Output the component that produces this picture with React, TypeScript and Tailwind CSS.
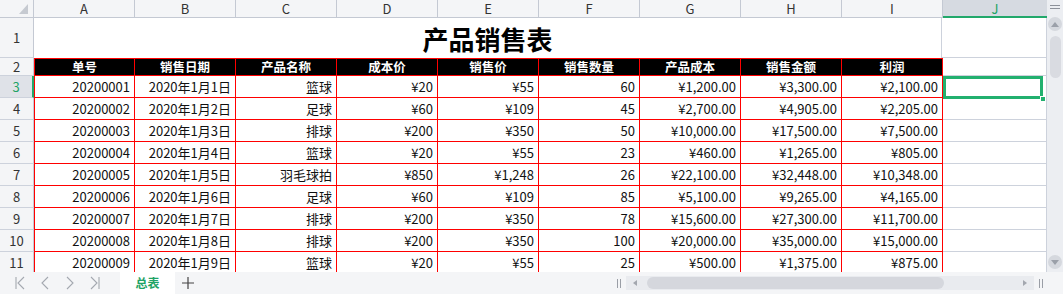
import React from 'react';

const cols = ['A', 'B', 'C', 'D', 'E', 'F', 'G', 'H', 'I'];
const heads = ['单号', '销售日期', '产品名称', '成本价', '销售价', '销售数量', '产品成本', '销售金额', '利润'];

const rows: string[][] = [
  ['20200001', '2020年1月1日', '篮球', '¥20', '¥55', '60', '¥1,200.00', '¥3,300.00', '¥2,100.00'],
  ['20200002', '2020年1月2日', '足球', '¥60', '¥109', '45', '¥2,700.00', '¥4,905.00', '¥2,205.00'],
  ['20200003', '2020年1月3日', '排球', '¥200', '¥350', '50', '¥10,000.00', '¥17,500.00', '¥7,500.00'],
  ['20200004', '2020年1月4日', '篮球', '¥20', '¥55', '23', '¥460.00', '¥1,265.00', '¥805.00'],
  ['20200005', '2020年1月5日', '羽毛球拍', '¥850', '¥1,248', '26', '¥22,100.00', '¥32,448.00', '¥10,348.00'],
  ['20200006', '2020年1月6日', '足球', '¥60', '¥109', '85', '¥5,100.00', '¥9,265.00', '¥4,165.00'],
  ['20200007', '2020年1月7日', '排球', '¥200', '¥350', '78', '¥15,600.00', '¥27,300.00', '¥11,700.00'],
  ['20200008', '2020年1月8日', '排球', '¥200', '¥350', '100', '¥20,000.00', '¥35,000.00', '¥15,000.00'],
  ['20200009', '2020年1月9日', '篮球', '¥20', '¥55', '25', '¥500.00', '¥1,375.00', '¥875.00'],
];

const RowHead = ({ n, h, active }: { n: number; h: string; active?: boolean }) => (
  <div
    className={`${h} w-[34px] shrink-0 flex items-center justify-center border-b border-[#cdd2dc] ${
      active ? 'bg-[#dfe2e8] text-[#1fa366] border-r-2 border-r-[#22a86b]' : 'bg-[#f4f5f7] text-[#333] border-r border-r-[#c4c9d3]'
    }`}
  >
    {n}
  </div>
);

const NavIcon = ({ d }: { d: string }) => (
  <svg width="12" height="16" viewBox="0 0 12 16" fill="none" stroke="#a4a8b0" strokeWidth="1.1">
    <path d={d} />
  </svg>
);

export default function App() {
  return (
    <div className="w-[1063px] h-[294px] overflow-hidden bg-white flex flex-col font-['Noto_Sans_CJK_SC','Noto_Sans',sans-serif] text-[13px] text-[#111]">
      <div className="flex h-[272px]">
        {/* sheet */}
        <div className="w-[1047px] h-[272px] overflow-hidden relative flex flex-col">
          {/* column headers */}
          <div className="flex h-[18px] shrink-0 text-[#333]">
            <div className="w-[34px] h-[18px] shrink-0 bg-[#f4f5f7] border-r border-b border-[#c4c9d3] relative">
              <svg className="absolute left-[19px] top-[4px]" width="9" height="10" viewBox="0 0 9 10">
                <path d="M9 0 L9 10 L0 10 Z" fill="#c6cad1" />
              </svg>
            </div>
            {cols.map((c) => (
              <div key={c} className="w-[101px] shrink-0 flex items-center justify-center bg-[#f4f5f7] border-r border-b border-[#c4c9d3] leading-none">
                {c}
              </div>
            ))}
            <div className="flex-1 flex items-center justify-center bg-[#d6dae1] border-b-2 border-[#22a86b] text-[#1fa366] leading-none">
              J
            </div>
          </div>

          {/* row 1: title */}
          <div className="flex h-[40px] shrink-0">
            <RowHead n={1} h="h-[40px]" />
            <div className="w-[908px] shrink-0 flex items-center justify-center text-[26px] font-bold text-black border-r border-[#cdd2dc]">
              产品销售表
            </div>
            <div className="flex-1 border-b border-r border-[#cdd2dc]" />
          </div>

          {/* row 2: header */}
          <div className="flex h-[18px] shrink-0">
            <RowHead n={2} h="h-[18px]" />
            {heads.map((t, i) => (
              <div
                key={t}
                className={`w-[101px] shrink-0 bg-black text-white font-bold text-[12.5px] leading-none flex items-center justify-center border-t border-r border-b border-[#ff0000] ${
                  i === 0 ? 'border-l' : ''
                }`}
              >
                {t}
              </div>
            ))}
            <div className="flex-1 border-b border-r border-[#cdd2dc]" />
          </div>

          {/* data rows */}
          {rows.map((r, ri) => (
            <div key={ri} className="flex h-[22px] shrink-0">
              <RowHead n={ri + 3} h="h-[22px]" active={ri === 0} />
              {r.map((v, ci) => (
                <div
                  key={ci}
                  className={`w-[101px] shrink-0 flex items-center justify-end pr-[4px] whitespace-nowrap border-r border-b border-[#ff0000] ${
                    ci === 0 ? 'border-l' : ''
                  }`}
                >
                  {v}
                </div>
              ))}
              <div className="flex-1 border-b border-r border-[#cdd2dc]" />
            </div>
          ))}

          {/* selected cell J3 */}
          <div className="absolute left-[943px] top-[76px] w-[100px] h-[23px] border-[3px] border-[#22b06f]" />
          <div className="absolute left-[1040px] top-[96px] w-[6px] h-[6px] bg-[#22b06f] border border-white" />
        </div>

        {/* vertical scrollbar */}
        <div className="w-[16px] h-[272px] bg-[#eceef2] flex flex-col items-center">
          <div className="mt-[5px] flex flex-col gap-[2px]">
            <div className="w-[10px] h-[1px] bg-[#8d919a]" />
            <div className="w-[10px] h-[1px] bg-[#8d919a]" />
          </div>
          <div className="mt-[8px] w-[14px] h-[14px] rounded-full bg-[#d5d8de] flex items-center justify-center">
            <svg width="8" height="5" viewBox="0 0 8 5">
              <path d="M4 0 L8 5 L0 5 Z" fill="#9ba0a9" />
            </svg>
          </div>
          <div className="mt-[5px] w-[11px] h-[42px] rounded-full bg-[#d9dbe1]" />
          <div className="flex-1" />
          <div className="mb-[3px] w-[14px] h-[14px] rounded-full bg-[#d5d8de] flex items-center justify-center">
            <svg width="8" height="5" viewBox="0 0 8 5">
              <path d="M0 0 L8 0 L4 5 Z" fill="#9ba0a9" />
            </svg>
          </div>
        </div>
      </div>

      {/* bottom bar */}
      <div className="h-[22px] flex items-center bg-[#f4f5f7]">
        <div className="flex items-center ml-[14px] gap-[13px] w-[96px]">
          <NavIcon d="M2 2 L2 14 M10 2 L4 8 L10 14" />
          <NavIcon d="M9 2 L3 8 L9 14" />
          <NavIcon d="M3 2 L9 8 L3 14" />
          <NavIcon d="M2 2 L8 8 L2 14 M10 2 L10 14" />
        </div>
        <div className="ml-[10px] w-[55px] h-[22px] bg-white flex items-center justify-center text-[#1fa366] font-bold text-[12px]">
          总表
        </div>
        <svg className="ml-[6px]" width="14" height="14" viewBox="0 0 14 14" stroke="#444" strokeWidth="1.2">
          <path d="M7 1 L7 13 M1 7 L13 7" />
        </svg>
        <div className="flex-1" />
        <div className="flex gap-[2px] mr-[5px]">
          <div className="w-[1px] h-[9px] bg-[#9a9ea6]" />
          <div className="w-[1px] h-[9px] bg-[#9a9ea6]" />
        </div>
        <div className="w-[408px] h-[14px] bg-[#e9ebef] flex items-center">
          <svg className="ml-[7px]" width="4" height="6" viewBox="0 0 4 6">
            <path d="M4 0 L4 6 L0 3 Z" fill="#a3a7af" />
          </svg>
          <div className="ml-[10px] w-[297px] h-[12px] rounded-full bg-[#d5d7dd]" />
          <div className="flex-1" />
          <svg className="mr-[7px]" width="4" height="6" viewBox="0 0 4 6">
            <path d="M0 0 L4 3 L0 6 Z" fill="#a3a7af" />
          </svg>
        </div>
        <div className="flex gap-[2px] ml-[5px] mr-[20px]">
          <div className="w-[1px] h-[9px] bg-[#9a9ea6]" />
          <div className="w-[1px] h-[9px] bg-[#9a9ea6]" />
        </div>
      </div>
    </div>
  );
}
